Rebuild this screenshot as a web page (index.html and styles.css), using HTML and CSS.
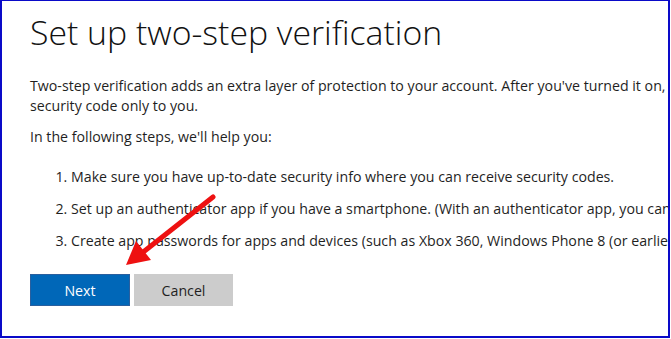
FILE: index.html
```
<!DOCTYPE html>
<html lang="en">
<head>
    <meta charset="UTF-8">
    <meta name="viewport" content="width=device-width, initial-scale=1.0">
    <title>Set up two-step verification</title>
    <link rel="stylesheet" href="styles.css">
</head>
<body>

    <div class="frame">
        <div class="content">
            <h1 class="title">Set up two-step verification</h1>

            <p class="text">Two-step verification adds an extra layer of protection to your account. After you've turned it on, we'll send a<br>security code only to you.</p>

            <p class="text">In the following steps, we'll help you:</p>

            <ol class="steps">
                <li>Make sure you have up-to-date security info where you can receive security codes.</li>
                <li>Set up an authenticator app if you have a smartphone. (With an authenticator app, you can get codes even without a connection.)</li>
                <li>Create app passwords for apps and devices (such as Xbox 360, Windows Phone 8 (or earlier), or mail apps) that don't support it.</li>
            </ol>

            <div class="actions">
                <button class="btn btn-primary" type="button">Next</button>
                <button class="btn btn-secondary" type="button">Cancel</button>
            </div>
        </div>

        <!-- red pointer arrow drawn over the screenshot -->
        <svg class="arrow" width="671" height="339" viewBox="0 0 671 339">
            <line x1="211" y1="196" x2="140" y2="252" stroke="#ee1111" stroke-width="5" stroke-linecap="round"/>
            <polygon points="124,264 134,240 149,259" fill="#ee1111"/>
        </svg>
    </div>

</body>
</html>
```

FILE: styles.css
```
body {
    margin: 0;
    background-color: #fff;
    font-family: "Open Sans", "Noto Sans", sans-serif;
    color: #1f1f1f;
}

.frame {
    position: relative;
    width: 670px;
    height: 338px;
    box-sizing: border-box;
    border: 2px solid #0a0ac8;
    border-top-width: 1px;
    overflow: hidden;
}

.content {
    padding: 9px 0 0 28px;
    width: 1000px;
}

.title {
    margin: 0 0 22px 0;
    font-size: 33.8px;
    font-weight: 300;
    line-height: 44px;
    color: #111;
}

.text {
    margin: 0 0 11px 0;
    font-size: 14.2px;
    line-height: 20px;
    white-space: nowrap;
}

.steps {
    margin: 20px 0 0 0;
    padding-left: 41px;
    font-size: 14.2px;
    line-height: 20px;
    white-space: nowrap;
}

.steps li {
    margin-bottom: 12px;
}

.actions {
    display: flex;
    gap: 4px;
    margin-top: 23px;
}

.btn {
    width: 100px;
    height: 32px;
    border: none;
    font-family: inherit;
    font-size: 14.2px;
    cursor: pointer;
}

.btn-primary {
    background-color: #0067b8;
    color: #fff;
    border: 1px solid #2a5f9e;
}

.btn-secondary {
    width: 99px;
    background-color: #cccccc;
    color: #1f1f1f;
}

.arrow {
    position: absolute;
    left: 0;
    top: 0;
    pointer-events: none;
}
```
